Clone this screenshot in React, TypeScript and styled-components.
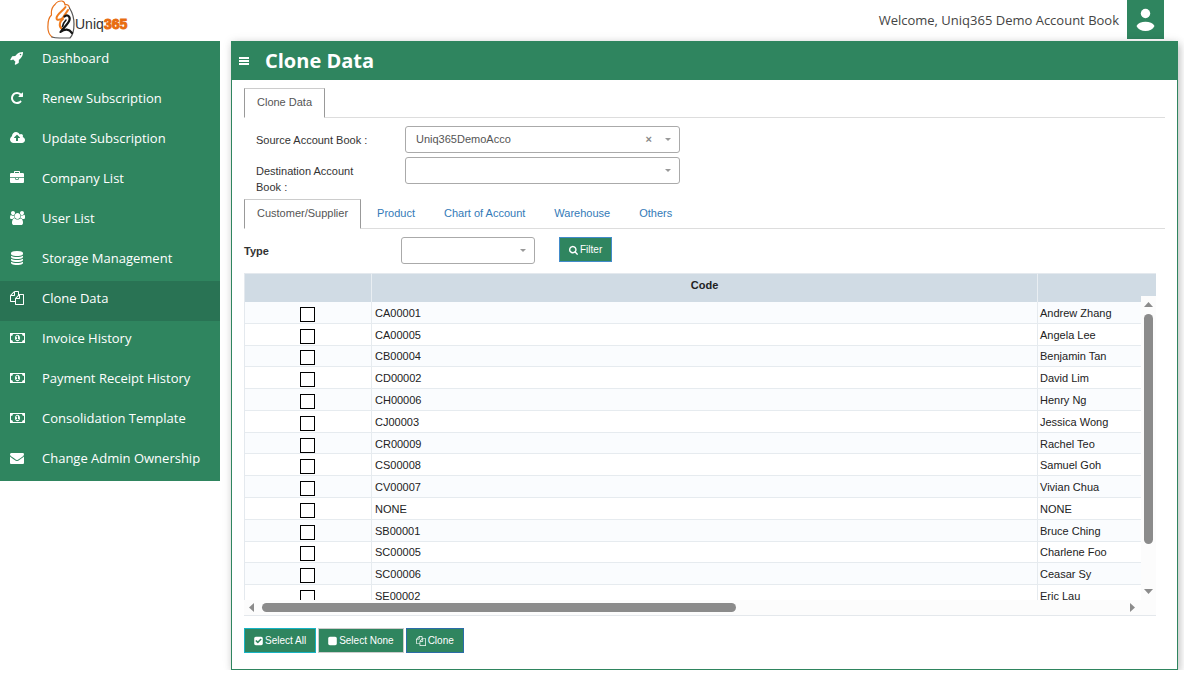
import React, { useState } from "react";
import styled, { createGlobalStyle } from "styled-components";

const green = "#2f855f";
const darkGreen = "#297354";
const line = "#dddddd";

const GlobalStyle = createGlobalStyle`
  *, *::before, *::after { box-sizing: border-box; }
  html, body { margin: 0; padding: 0; }
  html { overflow: hidden; }
  body {
    background: #ffffff;
    color: #333333;
    font-family: "Liberation Sans", Arial, sans-serif;
    font-size: 11px;
    line-height: 16px;
  }
  button, input, select { font-family: inherit; }
`;

const glyphs = {
  rocket: { x: 0, w: 1792, d: "M1440 448q0-40-28-68t-68-28-68 28-28 68 28 68 68 28 68-28 28-68zm224-288q0 249-75.5 430.5t-253.5 360.5q-81 80-195 176l-20 379q-2 16-16 26l-384 224q-7 4-16 4-12 0-23-9l-64-64q-13-14-8-32l85-276-281-281-276 85q-3 1-9 1-14 0-23-9l-64-64q-17-19-5-39l224-384q10-14 26-16l379-20q96-114 176-195 188-187 358-258t431-71q14 0 24 9.5t10 22.5z" },
  repeat: { x: 0, w: 1792, d: "M1664 256v448q0 26-19 45t-45 19h-448q-42 0-59-40-17-39 14-69l138-138q-148-137-349-137-104 0-198.5 40.5t-163.5 109.5-109.5 163.5-40.5 198.5 40.5 198.5 109.5 163.5 163.5 109.5 198.5 40.5q119 0 225-52t179-147q7-10 23-12 15 0 25 9l137 138q9 8 9.5 20.5t-7.5 22.5q-109 132-264 204.5t-327 72.5q-156 0-298-61t-245-164-164-245-61-298 61-298 164-245 245-164 298-61q147 0 284.5 55.5t244.5 156.5l130-129q29-31 70-14 39 17 39 59z" },
  cloud: { x: 0, w: 1920, d: "M1280 864q0-14-9-23l-352-352q-9-9-23-9t-23 9l-351 351q-10 12-10 24 0 14 9 23t23 9h224v352q0 13 9.5 22.5t22.5 9.5h192q13 0 22.5-9.5t9.5-22.5v-352h224q13 0 22.5-9.5t9.5-22.5zm640 288q0 159-112.5 271.5t-271.5 112.5h-1088q-185 0-316.5-131.5t-131.5-316.5q0-130 70-240t188-165q-2-30-2-43 0-212 150-362t362-150q156 0 285.5 87t188.5 231q71-62 166-62 106 0 181 75t75 181q0 76-41 138 130 31 213.5 135.5t83.5 238.5z" },
  briefcase: { x: 0, w: 1792, d: "M640 256h512v-128h-512v128zm1152 640v480q0 66-47 113t-113 47h-1472q-66 0-113-47t-47-113v-480h672v160q0 26 19 45t45 19h320q26 0 45-19t19-45v-160h672zm-768 0v128h-256v-128h256zm768-480v384h-1792v-384q0-66 47-113t113-47h352v-160q0-40 28-68t68-28h576q40 0 68 28t28 68v160h352q66 0 113 47t47 113z" },
  users: { x: 0, w: 1920, d: "M593 896q-162 5-265 128h-134q-82 0-138-40.5t-56-118.5q0-353 124-353 6 0 43.5 21t97.5 42.5 119 21.5q67 0 133-23-5 37-5 66 0 159 93 293zm1071 637q0 120-73 189.5t-194 69.5h-874q-121 0-194-69.5t-73-189.5q0-53 3.5-103.5t14-109 26.5-108.5 43-97.5 62-81 85.5-53.5 111.5-20q10 0 43 21.5t73 48 107 48 135 21.5 135-21.5 107-48 73-48 43-21.5q61 0 111.5 20t85.5 53.5 62 81 43 97.5 26.5 108.5 14 109 3.5 103.5zm-1024-1277q0 106-75 181t-181 75-181-75-75-181 75-181 181-75 181 75 75 181zm704 384q0 159-112.5 271.5t-271.5 112.5-271.5-112.5-112.5-271.5 112.5-271.5 271.5-112.5 271.5 112.5 112.5 271.5zm576 225q0 78-56 118.5t-138 40.5h-134q-103-123-265-128 93-134 93-293 0-29-5-66 66 23 133 23 59 0 119-21.5t97.5-42.5 43.5-21q124 0 124 353zm-128-609q0 106-75 181t-181 75-181-75-75-181 75-181 181-75 181 75 75 181z" },
  database: { x: 0, w: 1792, d: "M896 768q237 0 443-43t325-127v170q0 69-103 128t-280 93.5-385 34.5-385-34.5-280-93.5-103-128v-170q119 84 325 127t443 43zm0 768q237 0 443-43t325-127v170q0 69-103 128t-280 93.5-385 34.5-385-34.5-280-93.5-103-128v-170q119 84 325 127t443 43zm0-384q237 0 443-43t325-127v170q0 69-103 128t-280 93.5-385 34.5-385-34.5-280-93.5-103-128v-170q119 84 325 127t443 43zm0-1152q208 0 385 34.5t280 93.5 103 128v128q0 69-103 128t-280 93.5-385 34.5-385-34.5-280-93.5-103-128v-128q0-69 103-128t280-93.5 385-34.5z" },
  files: { x: 0, w: 1792, d: "M1696 384q40 0 68 28t28 68v1216q0 40-28 68t-68 28h-960q-40 0-68-28t-28-68v-288h-544q-40 0-68-28t-28-68v-672q0-40 20-88t48-76l408-408q28-28 76-48t88-20h416q40 0 68 28t28 68v328q68-40 128-40h416zm-544 213l-299 299h299v-299zm-640-384l-299 299h299v-299zm196 647l316-316v-416h-384v416q0 40-28 68t-68 28h-416v640h512v-256q0-40 20-88t48-76zm956 804v-1152h-384v416q0 40-28 68t-68 28h-416v640h896z" },
  money: { x: 0, w: 1920, d: "M0 256h1920v1280h-1920zM384 384a256 256 0 0 1-256 256v512a256 256 0 0 1 256 256h1152a256 256 0 0 1 256-256v-512a256 256 0 0 1-256-256zM960 480c190 0 320 190 320 416s-130 416-320 416-320-190-320-416 130-416 320-416zM768 1152h384v-96h-128v-448h-114l-148 137 77 80 61-57v288h-132z" },
  envelope: { x: 0, w: 1792, d: "M1792 710v794q0 66-47 113t-113 47h-1472q-66 0-113-47t-47-113v-794q44 49 101 87 362 246 497 345 57 42 92.5 65.5t94.5 48 110 24.5h2q51 0 110-24.5t94.5-48 92.5-65.5q170-123 498-345 57-39 100-87zm0-294q0 79-49 151t-122 123q-376 261-468 325-10 7-42.5 31t-54 38.5-52 32.5-57.5 27-50 9h-2q-23 0-50-9t-57.5-27-52-32.5-54-38.5-42.5-31q-91-64-262-182.5t-205-142.5q-62-42-117-115.5t-55-136.5q0-78 41.5-130t118.5-52h1472q65 0 112.5 47t47.5 113z" },
  bars: { x: 0, w: 1792, d: "M149 299h1493v299h-1493zM149 747h1493v299h-1493zM149 1195h1493v299h-1493z" },
  search: { x: 64, w: 1664, d: "M1216 832q0-185-131.5-316.5t-316.5-131.5-316.5 131.5-131.5 316.5 131.5 316.5 316.5 131.5 316.5-131.5 131.5-316.5zm512 832q0 52-38 90t-90 38q-54 0-90-38l-343-342q-179 124-399 124-143 0-273.5-55.5t-225-150-150-225-55.5-273.5 55.5-273.5 150-225 225-150 273.5-55.5 273.5 55.5 225 150 150 225 55.5 273.5q0 220-124 399l343 343q37 37 37 90z" },
  checkSquare: { x: 128, w: 1536, d: "M813 1299l614-614q19-19 19-45t-19-45l-102-102q-19-19-45-19t-45 19l-467 467-211-211q-19-19-45-19t-45 19l-102 102q-19 19-19 45t19 45l358 358q19 19 45 19t45-19zm851-883v960q0 119-84.5 203.5t-203.5 84.5h-960q-119 0-203.5-84.5t-84.5-203.5v-960q0-119 84.5-203.5t203.5-84.5h960q119 0 203.5 84.5t84.5 203.5z" },
  square: { x: 128, w: 1536, d: "M1664 416v960q0 119-84.5 203.5t-203.5 84.5h-960q-119 0-203.5-84.5t-84.5-203.5v-960q0-119 84.5-203.5t203.5-84.5h960q119 0 203.5 84.5t84.5 203.5z" },
};

type GlyphName = keyof typeof glyphs;

function Glyph({ name, size }: { name: GlyphName; size: number }) {
  const g = glyphs[name];
  return (
    <svg height={size} width={Math.round((size * g.w) / 1792)} viewBox={`${g.x} 0 ${g.w} 1792`} fill="currentColor" fillRule={name === "money" ? "evenodd" : "nonzero"} aria-hidden="true">
      <path d={g.d} />
    </svg>
  );
}

const TopBar = styled.header`
  display: flex;
  justify-content: space-between;
  height: 41px;
  padding: 0 20px 0 47px;
`;

const Brand = styled.a`
  display: block;
  height: 40px;
`;

const Account = styled.div`
  display: flex;
  align-items: center;
  gap: 8px;
  height: 39px;
  color: #444444;
  font-family: "Open Sans", sans-serif;
  font-size: 13px;
`;

const Avatar = styled.button`
  width: 37px;
  height: 39px;
  padding: 0;
  border: 0;
  background: ${green};
  svg { display: block; }
`;

const Body = styled.div`
  display: flex;
  align-items: flex-start;
  padding-right: 6px;
  gap: 11px;
`;

const Sidebar = styled.nav`
  flex: 0 0 220px;
  background: ${green};
`;

const NavItem = styled.a<{ $active?: boolean }>`
  display: grid;
  grid-template-columns: 14px 1fr;
  align-items: center;
  justify-items: start;
  column-gap: 18px;
  height: 40px;
  padding: 0 10px 6px;
  background: ${(p) => (p.$active ? darkGreen : "transparent")};
  color: #ffffff;
  font-family: "Open Sans", sans-serif;
  font-size: 13px;
  text-decoration: none;
  white-space: nowrap;
  svg { justify-self: center; }
`;

const Panel = styled.main`
  flex: 1;
  min-width: 0;
  border: 1px solid ${green};
  background: #ffffff;
  box-shadow: 2px 3px 8px rgba(0, 0, 0, 0.2), 0 0 10px rgba(0, 0, 0, 0.08);
`;

const TitleBar = styled.div`
  display: flex;
  align-items: center;
  gap: 15px;
  height: 38px;
  padding-left: 6px;
  background: ${green};
  color: #ffffff;
`;

const MenuButton = styled.button`
  display: flex;
  padding: 0;
  border: 0;
  background: none;
  color: inherit;
`;

const Title = styled.h1`
  margin: 0;
  font-family: "Open Sans", sans-serif;
  font-size: 20px;
  line-height: 26px;
`;

const Content = styled.div`
  padding: 8px 12px 16px;
`;

const Tabs = styled.div`
  display: flex;
  gap: 3px;
  height: 30px;
  border-bottom: 1px solid ${line};
`;

const Tab = styled.button<{ $active?: boolean }>`
  height: 30px;
  padding: 0 12px 2px;
  border: 1px solid transparent;
  background: none;
  color: #337ab7;
  font-size: 11px;
  ${(p) =>
    p.$active &&
    `
    background: #ffffff;
    border-color: #cccccc #999999 #ffffff;
    color: #555555;
  `}
`;

const Form = styled.form`
  display: grid;
  grid-template-columns: 149px 275px;
  row-gap: 4px;
  padding: 8px 0 4px 12px;
`;

const FieldLabel = styled.label`
  max-width: 120px;
  padding-top: 6px;
`;

const Picker = styled.div`
  position: relative;
  height: 27px;
`;

const Select = styled.select`
  width: 100%;
  height: 27px;
  padding: 0 10px 2px;
  appearance: none;
  border: 1px solid #aaaaaa;
  border-radius: 3px;
  background: #ffffff;
  color: #555555;
  font-size: 11px;
`;

const Caret = styled.span`
  position: absolute;
  top: 12px;
  right: 9px;
  border: 3px solid transparent;
  border-top-color: #999999;
  border-bottom: 0;
  pointer-events: none;
`;

const Clear = styled.button`
  position: absolute;
  top: 5px;
  right: 28px;
  padding: 0;
  border: 0;
  background: none;
  color: #888888;
  font-size: 11px;
  font-weight: 700;
  line-height: 16px;
`;

const FilterRow = styled.form`
  display: grid;
  grid-template-columns: 157px 134px auto;
  justify-content: start;
  align-items: start;
  height: 44px;
  padding-top: 8px;
`;

const FilterLabel = styled.label`
  padding-top: 6px;
  font-weight: 700;
`;

const Button = styled.button<{ $edge: string }>`
  display: flex;
  align-items: center;
  justify-content: center;
  gap: 2px;
  height: 25px;
  padding: 0 9px;
  border: 1px solid ${(p) => p.$edge};
  background: ${green};
  color: #ffffff;
  font-size: 10px;
`;

const FilterSlot = styled.div`
  padding-left: 24px;
`;

const GridFrame = styled.section`
  position: relative;
  margin-right: 9px;
  border-bottom: 1px solid #e4e8ec;
`;

const GridView = styled.div`
  height: 327px;
  overflow: hidden;
`;

const Grid = styled.table`
  width: 100%;
  height: 334px;
  table-layout: fixed;
  border-collapse: separate;
  border-spacing: 0;
  border-left: 1px solid #e4e9ee;
  color: #222222;
`;

const Head = styled.th`
  height: 29px;
  padding: 0 0 6px;
  border-top: 1px solid #e4e9ee;
  border-right: 1px solid #e9eef2;
  background: #d0dbe4;
  line-height: 16px;
  &:last-child { border-right: 0; }
`;

const Row = styled.tr`
  background: #ffffff;
  &:nth-child(odd) { background: #fafcfe; }
`;

const Cell = styled.td<{ $kind?: "tick" | "name" }>`
  padding: ${(p) => (p.$kind === "tick" ? "1px 2px 0 0" : p.$kind === "name" ? "1px 0 0 2px" : "1px 0 0 3px")};
  border-right: 1px solid #e6ebef;
  border-bottom: 1px solid #e6ebef;
  line-height: 16px;
  &:last-child { border-right: 0; }
`;

const Tick = styled.input`
  display: block;
  width: 15px;
  height: 15px;
  margin: 3px auto 0;
  appearance: none;
  border: 1px solid #000000;
  background: #ffffff;
  &:checked { background: ${green}; }
`;

const ScrollV = styled.div`
  position: absolute;
  top: 23px;
  right: 0;
  bottom: 15px;
  display: flex;
  flex-direction: column;
  align-items: center;
  width: 15px;
  padding: 6px 0;
  background: #fcfcfc;
`;

const ThumbV = styled.div`
  width: 9px;
  height: 230px;
  margin: 7px 0 auto;
  border-radius: 5px;
  background: #8b8b8b;
`;

const ScrollH = styled.div`
  display: flex;
  align-items: center;
  height: 15px;
  padding: 0 21px 0 5px;
  background: #fcfcfc;
`;

const ThumbH = styled.div`
  flex: 0 0 474px;
  height: 9px;
  margin: 0 auto 0 8px;
  border-radius: 5px;
  background: #8b8b8b;
`;

const Actions = styled.div`
  display: flex;
  gap: 2px;
  padding-top: 12px;
`;

const navItems: { icon: GlyphName; label: string }[] = [
  { icon: "rocket", label: "Dashboard" },
  { icon: "repeat", label: "Renew Subscription" },
  { icon: "cloud", label: "Update Subscription" },
  { icon: "briefcase", label: "Company List" },
  { icon: "users", label: "User List" },
  { icon: "database", label: "Storage Management" },
  { icon: "files", label: "Clone Data" },
  { icon: "money", label: "Invoice History" },
  { icon: "money", label: "Payment Receipt History" },
  { icon: "money", label: "Consolidation Template" },
  { icon: "envelope", label: "Change Admin Ownership" },
];

const categories = ["Customer/Supplier", "Product", "Chart of Account", "Warehouse", "Others"];

const records = [
  ["CA00001", "Andrew Zhang"],
  ["CA00005", "Angela Lee"],
  ["CB00004", "Benjamin Tan"],
  ["CD00002", "David Lim"],
  ["CH00006", "Henry Ng"],
  ["CJ00003", "Jessica Wong"],
  ["CR00009", "Rachel Teo"],
  ["CS00008", "Samuel Goh"],
  ["CV00007", "Vivian Chua"],
  ["NONE", "NONE"],
  ["SB00001", "Bruce Ching"],
  ["SC00005", "Charlene Foo"],
  ["SC00006", "Ceasar Sy"],
  ["SE00002", "Eric Lau"],
];

function Logo() {
  return (
    <svg width="82" height="40" viewBox="0 0 82 40" role="img" aria-label="Uniq365">
      <g fill="none" strokeLinecap="round" strokeLinejoin="round">
        <path d="M5 37C1 34 0.500 30 1 25C1 21 1.500 18 4.500 15C4 11 5 7 8 4.500C9.500 2 12 0.800 15 1C17 1.500 18 3 18 5C20 4 22 5 22.500 8" stroke="#e8721c" strokeWidth="1.200" />
        <path d="M5 37C8 38.200 11 38 14 38H23C26 35 27 29 27 24C27 18 25 12 22.500 8" stroke="#555555" strokeWidth="1.200" />
        <path d="M18.500 7C16 11 10 14 9.500 18C9.500 21 14 20 16 17.500C17 15 20 12 21 10" stroke="#f07c1e" strokeWidth="2" />
        <path d="M16 19C13 21 11 26 15 29" stroke="#f07c1e" strokeWidth="2" />
        <path d="M17.500 16.500C20 14 23.500 16 22.500 20C21.500 24 16 28 13.500 32C18 28.500 22 29 25 33" stroke="#151515" strokeWidth="2.200" />
        <path d="M19 20C17 22 16 24 15.500 26.500" stroke="#151515" strokeWidth="1.600" />
      </g>
      <g fontFamily="'Liberation Sans', Arial, sans-serif">
        <text x="28" y="29" fontSize="14" fill="#333333">Uniq</text>
        <text x="57" y="29" fontSize="14" fontWeight="700" fill="#e86c10" stroke="#e86c10">365</text>
      </g>
    </svg>
  );
}

export default function App() {
  const [category, setCategory] = useState(0);
  const [picked, setPicked] = useState<Record<string, boolean>>({});
  const pickAll = (value: boolean) => setPicked(Object.fromEntries(records.map(([code]) => [code, value])));

  return (
    <>
      <GlobalStyle />
      <TopBar>
        <Brand href="#"><Logo /></Brand>
        <Account>
          <span>Welcome, Uniq365 Demo Account Book</span>
          <Avatar type="button" aria-label="Account">
            <svg width="37" height="39" viewBox="0 0 37 39" fill="#ffffff">
              <circle cx="18.500" cy="13.500" r="4.700" />
              <path d="M9.500 26C11 23.200 14.500 21.800 18.500 21.800S26 23.200 27.500 26C26 29.300 22.500 31 18.500 31S11 29.300 9.500 26Z" />
            </svg>
          </Avatar>
        </Account>
      </TopBar>
      <Body>
        <Sidebar aria-label="Main">
          {navItems.map((item) => (
            <NavItem key={item.label} href="#" $active={item.label === "Clone Data"}>
              <Glyph name={item.icon} size={14} />
              {item.label}
            </NavItem>
          ))}
        </Sidebar>
        <Panel>
          <TitleBar>
            <MenuButton type="button" aria-label="Toggle menu"><Glyph name="bars" size={12} /></MenuButton>
            <Title>Clone Data</Title>
          </TitleBar>
          <Content>
            <Tabs role="tablist">
              <Tab type="button" role="tab" aria-selected $active>Clone Data</Tab>
            </Tabs>
            <Form>
              <FieldLabel htmlFor="source">Source Account Book :</FieldLabel>
              <Picker>
                <Select id="source" defaultValue="Uniq365DemoAcco">
                  <option>Uniq365DemoAcco</option>
                </Select>
                <Clear type="button" aria-label="Clear source">×</Clear>
                <Caret />
              </Picker>
              <FieldLabel htmlFor="destination">Destination Account Book :</FieldLabel>
              <Picker>
                <Select id="destination" defaultValue=""><option value="" /></Select>
                <Caret />
              </Picker>
            </Form>
            <Tabs role="tablist">
              {categories.map((name, i) => (
                <Tab key={name} type="button" role="tab" aria-selected={i === category} $active={i === category} onClick={() => setCategory(i)}>
                  {name}
                </Tab>
              ))}
            </Tabs>
            <FilterRow>
              <FilterLabel htmlFor="type">Type</FilterLabel>
              <Picker>
                <Select id="type" defaultValue=""><option value="" /></Select>
                <Caret />
              </Picker>
              <FilterSlot>
                <Button type="button" $edge="#428bca"><Glyph name="search" size={10} />Filter</Button>
              </FilterSlot>
            </FilterRow>
            <GridFrame>
              <GridView>
                <Grid>
                  <colgroup>
                    <col style={{ width: 127 }} />
                    <col />
                    <col style={{ width: 118 }} />
                  </colgroup>
                  <thead>
                    <tr><Head /><Head>Code</Head><Head /></tr>
                  </thead>
                  <tbody>
                    {records.map(([code, name]) => (
                      <Row key={code}>
                        <Cell $kind="tick">
                          <Tick
                            type="checkbox"
                            aria-label={`Select ${code}`}
                            checked={!!picked[code]}
                            onChange={(e) => setPicked({ ...picked, [code]: e.target.checked })}
                          />
                        </Cell>
                        <Cell>{code}</Cell>
                        <Cell $kind="name">{name}</Cell>
                      </Row>
                    ))}
                  </tbody>
                </Grid>
              </GridView>
              <ScrollH aria-hidden="true">
                <svg width="5" height="9" fill="#8b8b8b"><path d="M5 0V9L0 4.500Z" /></svg>
                <ThumbH />
                <svg width="5" height="9" fill="#8b8b8b"><path d="M0 0V9L5 4.500Z" /></svg>
              </ScrollH>
              <ScrollV aria-hidden="true">
                <svg width="9" height="5" fill="#8b8b8b"><path d="M0 5H9L4.500 0Z" /></svg>
                <ThumbV />
                <svg width="9" height="5" fill="#8b8b8b"><path d="M0 0H9L4.500 5Z" /></svg>
              </ScrollV>
            </GridFrame>
            <Actions>
              <Button type="button" $edge="#17b3c4" onClick={() => pickAll(true)}><Glyph name="checkSquare" size={10} />Select All</Button>
              <Button type="button" $edge="#cccccc" onClick={() => pickAll(false)}><Glyph name="square" size={10} />Select None</Button>
              <Button type="button" $edge="#2b6ca8"><Glyph name="files" size={10} />Clone</Button>
            </Actions>
          </Content>
        </Panel>
      </Body>
    </>
  );
}
